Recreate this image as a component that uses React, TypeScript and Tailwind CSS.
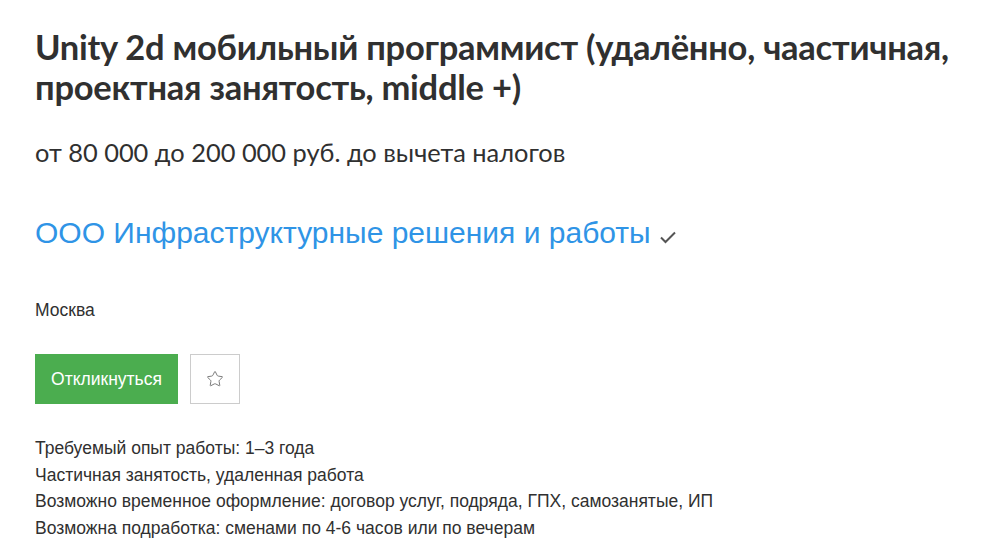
import { Star } from "lucide-react";

const details = [
  "Требуемый опыт работы: 1–3 года",
  "Частичная занятость, удаленная работа",
  "Возможно временное оформление: договор услуг, подряда, ГПХ, самозанятые, ИП",
  "Возможна подработка: сменами по 4-6 часов или по вечерам",
];

const App = () => {
  return (
    <div className="w-[982px] h-[556px] bg-white pl-[35px] pr-[10px] pt-[27px] overflow-hidden">
      <h1 className="font-['Lato',sans-serif] font-bold text-[34.5px] leading-[40px] tracking-[-0.25px] text-[#303030]">
        Unity 2d мобильный программист (удалённо, чаастичная, проектная занятость, middle +)
      </h1>
      <p className="mt-[30px] font-['Lato',sans-serif] text-[25.4px] leading-[30px] text-[#303030]">
        от 80 000 до 200 000 руб. до вычета налогов
      </p>
      <div className="mt-[48px] flex items-center gap-[8px]">
        <a className="font-['Liberation_Sans',Arial,sans-serif] text-[30px] leading-[36px] text-[#2f94e6]">
          ООО Инфраструктурные решения и работы
        </a>
        <svg width="18" height="14" viewBox="0 0 18 14" className="mt-[7px]">
          <path d="M2 7.5 L6.5 12 L16 2.5" stroke="#555" strokeWidth="2" fill="none" />
        </svg>
      </div>
      <p className="mt-[49px] font-['Liberation_Sans',Arial,sans-serif] text-[17.5px] leading-[20px] text-[#303030]">
        Москва
      </p>
      <div className="mt-[34px] flex gap-[12px]">
        <button className="h-[50px] w-[143px] bg-[#4bad4f] text-white font-['Liberation_Sans',Arial,sans-serif] text-[17.5px]">
          Откликнуться
        </button>
        <button className="h-[50px] w-[50px] border border-[#cccccc] flex items-center justify-center">
          <Star size={18} strokeWidth={1.3} color="#777" />
        </button>
      </div>
      <ul className="mt-[31px] font-['Liberation_Sans',Arial,sans-serif] text-[17.5px] leading-[26.7px] text-[#303030]">
        {details.map((line) => (
          <li key={line}>{line}</li>
        ))}
      </ul>
    </div>
  );
};

export default App;
